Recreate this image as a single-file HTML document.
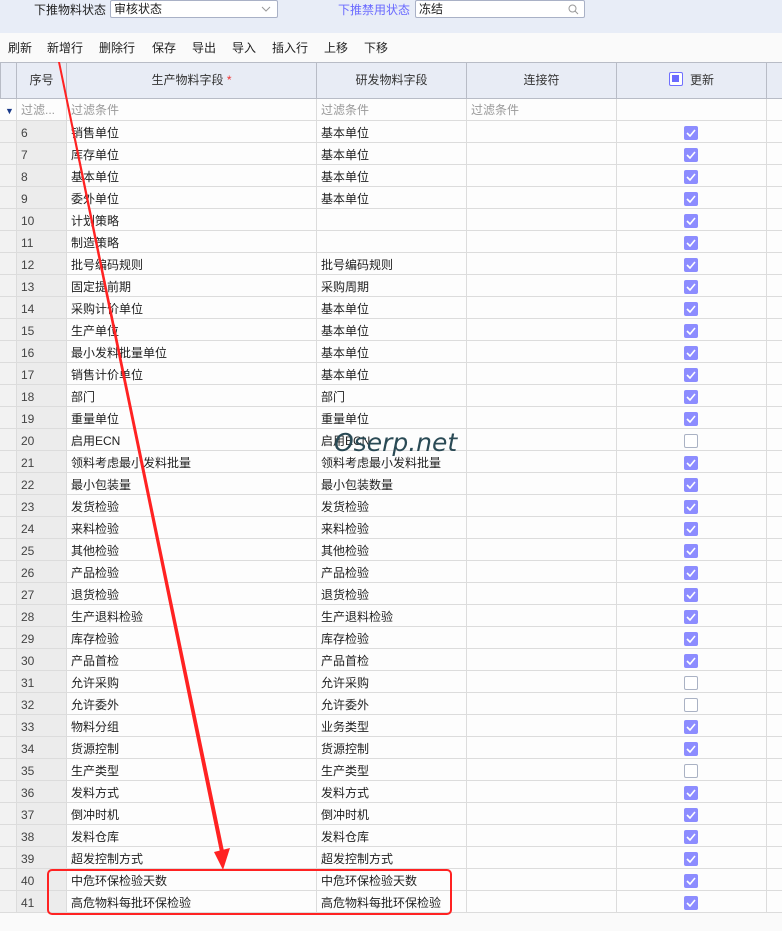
<!DOCTYPE html>
<html><head><meta charset="utf-8">
<style>
*{margin:0;padding:0;box-sizing:border-box}
body{width:782px;height:931px;overflow:hidden;background:#fafafa;font-family:"Liberation Sans","Noto Sans CJK SC",sans-serif;font-size:12px;color:#222;position:relative}
.top{position:absolute;left:0;top:0;width:782px;height:33px;background:#e8edf7}
.lbl{position:absolute;top:1px;font-size:12px}
.inp{position:absolute;top:0;height:18px;background:#fff;border:1px solid #a9b1c6;border-radius:2px;padding-left:3px;line-height:16px}
.tb{position:absolute;top:33px;left:0;width:782px;height:27px;background:#fafafa}
.tb span{position:absolute;top:6px;font-size:12px}
.hd{position:absolute;top:62px;height:37px;background:#e8ecf5;border-top:1px solid #b8bcc6;border-bottom:1px solid #b8bcc6;border-right:1px solid #b8bcc6;text-align:center;line-height:35px;color:#333}
.c{position:absolute;height:22px;line-height:25px;overflow:hidden;border-bottom:1px solid #dcdcdc;border-right:1px solid #dcdcdc;padding-left:4px;background:#fdfdfd}
.f{color:#999;line-height:23px}
.cb{position:absolute;width:14px;height:14px;border-radius:2px;background:#8c8cff}
.cb svg{position:absolute;left:2px;top:3px}
.ub{position:absolute;width:14px;height:14px;border-radius:2px;border:1px solid #aab2c4;background:#fff}
</style></head><body>
<div class="top"></div>
<div class="lbl" style="left:34px">下推物料状态</div>
<div class="inp" style="left:110px;width:168px">审核状态<svg style="position:absolute;right:6px;top:5px" width="10" height="6"><path d="M1 1 L5 5 L9 1" fill="none" stroke="#999"/></svg></div>
<div class="lbl" style="left:338px;color:#6a6aff">下推禁用状态</div>
<div class="inp" style="left:415px;width:170px">冻结<svg style="position:absolute;right:5px;top:3px" width="11" height="11"><circle cx="4.5" cy="4.5" r="3.5" fill="none" stroke="#999"/><line x1="7" y1="7" x2="10" y2="10" stroke="#999"/></svg></div>
<div class="tb">
<span style="left:8px">刷新</span><span style="left:47px">新增行</span><span style="left:99px">删除行</span><span style="left:152px">保存</span><span style="left:192px">导出</span><span style="left:232px">导入</span><span style="left:272px">插入行</span><span style="left:324px">上移</span><span style="left:364px">下移</span>
</div>
<div class="hd" style="left:0;width:17px;border-left:1px solid #b8bcc6"></div>
<div class="hd" style="left:17px;width:50px">序号</div>
<div class="hd" style="left:67px;width:250px">生产物料字段 <span style="color:#e33">*</span></div>
<div class="hd" style="left:317px;width:150px">研发物料字段</div>
<div class="hd" style="left:467px;width:150px">连接符</div>
<div class="hd" style="left:617px;width:150px"><span style="display:inline-block;width:14px;height:14px;border:1.5px solid #7070ff;border-radius:2px;vertical-align:-2px;margin-right:7px;position:relative;background:#fff"><span style="position:absolute;left:2px;top:2px;width:7px;height:7px;background:#6b6bff"></span></span>更新</div>
<div class="hd" style="left:767px;width:15px;border-right:none"></div>
<div id="rows"></div>
<script>
var d=[["6","销售单位","基本单位",1],["7","库存单位","基本单位",1],["8","基本单位","基本单位",1],["9","委外单位","基本单位",1],["10","计划策略","",1],["11","制造策略","",1],["12","批号编码规则","批号编码规则",1],["13","固定提前期","采购周期",1],["14","采购计价单位","基本单位",1],["15","生产单位","基本单位",1],["16","最小发料批量单位","基本单位",1],["17","销售计价单位","基本单位",1],["18","部门","部门",1],["19","重量单位","重量单位",1],["20","启用ECN","启用ECN",0],["21","领料考虑最小发料批量","领料考虑最小发料批量",1],["22","最小包装量","最小包装数量",1],["23","发货检验","发货检验",1],["24","来料检验","来料检验",1],["25","其他检验","其他检验",1],["26","产品检验","产品检验",1],["27","退货检验","退货检验",1],["28","生产退料检验","生产退料检验",1],["29","库存检验","库存检验",1],["30","产品首检","产品首检",1],["31","允许采购","允许采购",0],["32","允许委外","允许委外",0],["33","物料分组","业务类型",1],["34","货源控制","货源控制",1],["35","生产类型","生产类型",0],["36","发料方式","发料方式",1],["37","倒冲时机","倒冲时机",1],["38","发料仓库","发料仓库",1],["39","超发控制方式","超发控制方式",1],["40","中危环保检验天数","中危环保检验天数",1],["41","高危物料每批环保检验","高危物料每批环保检验",1]];
var h='';
var y=99;
h+='<div class="c" style="left:0;top:'+y+'px;width:17px;color:#1a3a8a;font-size:9px;padding-left:5px">▼</div>';
h+='<div class="c f" style="left:17px;top:'+y+'px;width:50px">过滤...</div>';
h+='<div class="c f" style="left:67px;top:'+y+'px;width:250px">过滤条件</div>';
h+='<div class="c f" style="left:317px;top:'+y+'px;width:150px">过滤条件</div>';
h+='<div class="c f" style="left:467px;top:'+y+'px;width:150px">过滤条件</div>';
h+='<div class="c" style="left:617px;top:'+y+'px;width:150px"></div>';
h+='<div class="c" style="left:767px;top:'+y+'px;width:15px;border-right:none"></div>';
for(var i=0;i<d.length;i++){y=121+i*22;var r=d[i];
h+='<div class="c" style="left:0;top:'+y+'px;width:17px;background:#f2f2f2"></div>';
h+='<div class="c" style="left:17px;top:'+y+'px;width:50px;background:#ececec;color:#444">'+r[0]+'</div>';
h+='<div class="c" style="left:67px;top:'+y+'px;width:250px">'+r[1]+'</div>';
h+='<div class="c" style="left:317px;top:'+y+'px;width:150px">'+r[2]+'</div>';
h+='<div class="c" style="left:467px;top:'+y+'px;width:150px"></div>';
h+='<div class="c" style="left:617px;top:'+y+'px;width:150px"></div>';
h+='<div class="c" style="left:767px;top:'+y+'px;width:15px;border-right:none"></div>';
if(r[3])h+='<div class="cb" style="left:684px;top:'+(y+5)+'px"><svg width="10" height="8"><path d="M1 4 L4 7 L9 1" fill="none" stroke="#fff" stroke-width="1.6"/></svg></div>';
else h+='<div class="ub" style="left:684px;top:'+(y+5)+'px"></div>';}
document.getElementById('rows').innerHTML=h;
</script>
<div style="position:absolute;left:334px;top:428px;font-size:25px;font-style:italic;color:#2a4a55;font-family:'DejaVu Sans',sans-serif;letter-spacing:0px">Oserp.net</div>
<svg style="position:absolute;left:0;top:0" width="782" height="931">
<polygon points="58,62 60,62 225,856 221,857" fill="#f22"/>
<polygon points="214,852 230,848 223,870" fill="#f22"/>
<rect x="48" y="870" width="403" height="44" rx="4" fill="none" stroke="#f22" stroke-width="2"/>
</svg>
</body></html>
